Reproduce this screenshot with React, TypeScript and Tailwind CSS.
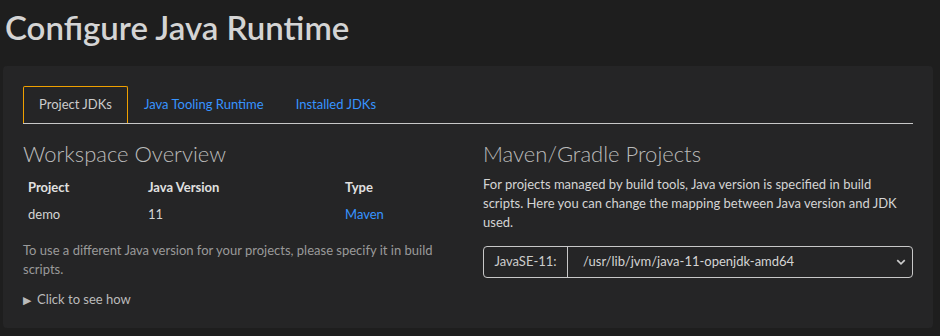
import React from 'react';

const FONT = "font-['Lato','Noto_Sans',sans-serif]";

const projects = [{ name: 'demo', version: '11', type: 'Maven' }];

export default function App() {
  return (
    <div className={`min-h-[336px] w-[940px] bg-[#1e1e1e] px-[3px] ${FONT} text-[#cccccc]`}>
      <h1 className="pl-[2px] pt-[6px] pb-[17px] text-[33px] leading-[43px] font-semibold text-[#d4d4d4]">
        Configure Java Runtime
      </h1>

      <div className="w-[930px] rounded-[4px] bg-[#252526] px-5 pt-5 pb-[19px]">
        {/* tabs */}
        <div className="flex items-end border-b border-[#c8c8c8] text-[13px]">
          <div className="flex h-[37px] items-center rounded-t-[2px] border border-b-0 border-[#f0a000] px-[15px] text-[#cccccc]">
            Project JDKs
          </div>
          <div className="flex h-[37px] items-center px-4 text-[#3794ff]">Java Tooling Runtime</div>
          <div className="flex h-[37px] items-center px-4 text-[#3794ff]">Installed JDKs</div>
        </div>

        <div className="grid grid-cols-[440px_1fr] gap-5">
          {/* left column */}
          <div>
            <h2 className="mt-[15px] text-[22px] leading-[30px] font-light text-[#bbbbbb]">Workspace Overview</h2>
            <table className="mt-[5px] w-full text-left text-[13px]">
              <thead>
                <tr className="h-[27px]">
                  <th className="w-[120px] px-[5px] font-bold text-[#e0e0e0]">Project</th>
                  <th className="w-[197px] px-[5px] font-bold text-[#e0e0e0]">Java Version</th>
                  <th className="px-[5px] font-bold text-[#e0e0e0]">Type</th>
                </tr>
              </thead>
              <tbody>
                {projects.map((p) => (
                  <tr key={p.name} className="h-[27px]">
                    <td className="px-[5px] text-[#d4d4d4]">{p.name}</td>
                    <td className="px-[5px] text-[#d4d4d4]">{p.version}</td>
                    <td className="px-[5px] text-[#3794ff]">{p.type}</td>
                  </tr>
                ))}
              </tbody>
            </table>
            <p className="mt-[13px] text-[13px] leading-[19px] text-[#9a9a9a]">
              To use a different Java version for your projects, please specify it in build scripts.
            </p>
            <div className="mt-[11px] flex items-center gap-[6px] text-[13px] leading-[19px] text-[#bbbbbb]">
              <span className="text-[11px]">▶</span>
              <span>Click to see how</span>
            </div>
          </div>

          {/* right column */}
          <div>
            <h2 className="mt-[15px] text-[22px] leading-[30px] font-light text-[#bbbbbb]">Maven/Gradle Projects</h2>
            <p className="mt-[6px] text-[13px] leading-[19px] text-[#d4d4d4]">
              For projects managed by build tools, Java version is specified in build scripts. Here you can change the
              mapping between Java version and JDK used.
            </p>
            <div className="mt-[14px] flex h-[32px] items-stretch rounded-[4px] border border-[#c8c8c8] text-[13px]">
              <div className="flex w-[84px] items-center justify-center border-r border-[#c8c8c8] text-[#cccccc]">
                JavaSE-11:
              </div>
              <div className="flex flex-1 items-center justify-between pl-[15px] pr-[5px] text-[#d4d4d4]">
                <span>/usr/lib/jvm/java-11-openjdk-amd64</span>
                <svg width="12" height="12" viewBox="0 0 16 16" fill="none" stroke="#cccccc" strokeWidth="2.2">
                  <path d="M3 5.5 8 10.5 13 5.5" />
                </svg>
              </div>
            </div>
          </div>
        </div>
      </div>
    </div>
  );
}
